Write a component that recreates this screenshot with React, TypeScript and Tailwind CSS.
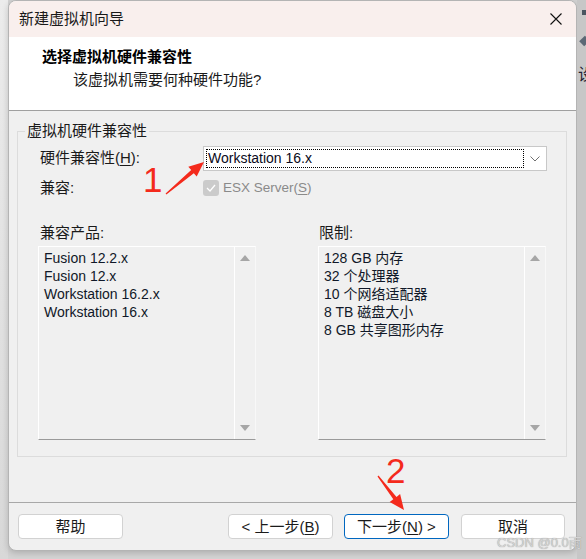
import React from 'react';

const font = "font-['Liberation_Sans','Noto_Sans_CJK_SC',sans-serif]";

// polygon for a hand drawn red arrow, thin tail -> wide head
const arrowPoints = (tx: number, ty: number, hx: number, hy: number) => {
  const dx = hx - tx;
  const dy = hy - ty;
  const len = Math.sqrt(dx * dx + dy * dy);
  const ux = dx / len;
  const uy = dy / len;
  const px = -uy;
  const py = ux;
  const headLen = 15;
  const bx = hx - ux * headLen;
  const by = hy - uy * headLen;
  const pts = [
    [tx + px * 0.6, ty + py * 0.6],
    [bx + px * 2, by + py * 2],
    [bx + px * 6.5, by + py * 6.5],
    [hx, hy],
    [bx - px * 6.5, by - py * 6.5],
    [bx - px * 2, by - py * 2],
    [tx - px * 0.6, ty - py * 0.6],
  ];
  return pts.map((p) => `${p[0].toFixed(1)},${p[1].toFixed(1)}`).join(' ');
};

const ListBox: React.FC<{ items: string[] }> = ({ items }) => (
  <div className="flex h-[194px] border border-t-white border-l-white border-r-[#f8f8f8] border-b-[#9a9a9a] bg-[#f0f0f0]">
    <div className="flex-1 pl-[5px] pt-[2px] text-[14px] leading-[18px] text-[#101828]">
      {items.map((it) => (
        <div key={it}>{it}</div>
      ))}
    </div>
    <div className="w-[21px] border-l border-l-white flex flex-col items-center justify-between py-[8px]">
      <svg width="10" height="6" viewBox="0 0 10 6">
        <polygon points="5,0 10,6 0,6" fill="#a6a6a6" />
      </svg>
      <svg width="10" height="6" viewBox="0 0 10 6">
        <polygon points="0,0 10,0 5,6" fill="#a6a6a6" />
      </svg>
    </div>
  </div>
);

const Btn: React.FC<{ children: React.ReactNode; primary?: boolean; w?: string }> = ({ children, primary, w }) => (
  <button
    type="button"
    className={`${w ?? 'w-[105px]'} h-[25px] rounded-[4px] bg-white text-[15px] leading-none text-[#1a1a1a] border ${
      primary ? 'border-[#0067c0]' : 'border-[#d2d2d2]'
    }`}
  >
    {children}
  </button>
);

export default function App() {
  return (
    <div className={`relative flex w-[586px] h-[559px] overflow-hidden bg-[#d3d3d3] ${font}`}>
      <div className="w-[8px] shrink-0 bg-gradient-to-b from-[#ececec] to-[#d8d8d8]" />

      <div className="w-[569px] h-[551px] shrink-0 flex flex-col rounded-[8px] border border-[#b4b4b4] bg-[#f0f0f0] overflow-hidden shadow-[0_2px_6px_rgba(0,0,0,0.18)]">
        {/* title bar */}
        <div className="h-[36px] shrink-0 flex items-center justify-between pl-[10px] pr-[14px] bg-[#f9efed] text-[15px] text-[#1a1a1a]">
          <span>新建虚拟机向导</span>
          <svg width="12" height="12" viewBox="0 0 12 12">
            <path d="M0.5 0.5 L11.5 11.5 M11.5 0.5 L0.5 11.5" stroke="#111" strokeWidth="1.1" />
          </svg>
        </div>

        {/* header */}
        <div className="h-[74px] shrink-0 bg-white border-b border-[#a0a0a0] pl-[33px] pt-[10px]">
          <div className="h-[20px] leading-[20px] text-[15px] font-bold text-black">选择虚拟机硬件兼容性</div>
          <div className="mt-[3px] ml-[31px] h-[20px] leading-[20px] text-[15px] text-[#1a1a1a]">该虚拟机需要何种硬件功能?</div>
        </div>

        {/* body */}
        <div className="h-[392px] shrink-0 border-b border-[#a8a8a8] pt-[10px] pl-[8px] pr-[9px]">
          <fieldset className="border border-[#dcdcdc] pl-[7px] pr-[7px] pb-[16px]">
            <legend className="px-[2px] h-[20px] leading-[20px] text-[15px] text-[#1a1a1a]">虚拟机硬件兼容性</legend>
            <div className="ml-[13px] mr-[12px] text-[15px] text-[#1a1a1a]">
              <div className="mt-[5px] h-[25px] grid grid-cols-[165px_1fr] items-center">
                <span className="pl-[2px]">
                  硬件兼容性(<span className="underline underline-offset-2">H</span>):
                </span>
                <div className="h-[25px] flex items-center border border-[#c8c8c8] bg-white">
                  <div className="ml-[2px] w-[318px] h-[19px] border border-dotted border-black flex items-center pl-[1px] text-[14px] text-[#0a0a20]">
                    Workstation 16.x
                  </div>
                  <div className="flex-1 flex justify-center">
                    <svg width="10" height="6" viewBox="0 0 10 6">
                      <path d="M0.5 0.5 L5 5 L9.5 0.5" fill="none" stroke="#707070" strokeWidth="1" />
                    </svg>
                  </div>
                </div>
              </div>

              <div className="mt-[5px] h-[24px] grid grid-cols-[165px_1fr] items-center">
                <span className="pl-[2px]">兼容:</span>
                <div className="flex items-center gap-[4px]">
                  <div className="w-[16px] h-[16px] rounded-[3px] bg-[#cbcbcb] flex items-center justify-center">
                    <svg width="10" height="8" viewBox="0 0 10 8">
                      <path d="M1 4 L4 7 L9 1" fill="none" stroke="#fff" strokeWidth="1.3" />
                    </svg>
                  </div>
                  <span className="text-[13.5px] text-[#8a8a8a]">
                    ESX Server(<span className="underline underline-offset-2">S</span>)
                  </span>
                </div>
              </div>

              <div className="mt-[23px] h-[20px] leading-[20px] grid grid-cols-[218px_228px] gap-x-[62px]">
                <span className="pl-[2px]">兼容产品:</span>
                <span className="pl-[1px]">限制:</span>
              </div>

              <div className="mt-[3px] grid grid-cols-[218px_228px] gap-x-[62px]">
                <ListBox items={['Fusion 12.2.x', 'Fusion 12.x', 'Workstation 16.2.x', 'Workstation 16.x']} />
                <ListBox items={['128 GB 内存', '32 个处理器', '10 个网络适配器', '8 TB 磁盘大小', '8 GB 共享图形内存']} />
              </div>
            </div>
          </fieldset>
        </div>

        {/* footer */}
        <div className="flex-1 flex items-start pt-[11px] pl-[9px] pr-[11px]">
          <Btn>帮助</Btn>
          <div className="flex-1" />
          <Btn>
            &lt; 上一步(<span className="underline underline-offset-2">B</span>)
          </Btn>
          <div className="w-[11px]" />
          <Btn primary>
            下一步(<span className="underline underline-offset-2">N</span>) &gt;
          </Btn>
          <div className="w-[12px]" />
          <Btn w="w-[104px]">取消</Btn>
        </div>
      </div>

      {/* right strip (background desktop) */}
      <div className="flex-1 bg-[#c7c7c7] flex flex-col items-end pt-[10px] gap-[22px]">
        <div className="w-[4px] h-[5px] bg-[#4a5560]" />
        <div className="w-[7px] h-[8px] bg-[#5b6875] rotate-45 mr-[-2px]" />
        <span className="text-[16px] leading-none text-[#223] mr-[-8px]">设</span>
      </div>

      {/* red annotations */}
      <svg className="absolute inset-0 pointer-events-none" width="586" height="559" viewBox="0 0 586 559">
        <polygon points={arrowPoints(166, 194, 204, 162)} fill="#f42a1c" />
        <polygon points={arrowPoints(378, 476, 404, 510)} fill="#f42a1c" />
      </svg>
      <span className="absolute left-[143px] top-[160px] text-[35px] leading-[40px] text-[#f42a1c] font-['Liberation_Sans',sans-serif]">
        1
      </span>
      <span className="absolute left-[386px] top-[451px] text-[35px] leading-[40px] text-[#f42a1c] font-['Liberation_Sans',sans-serif]">
        2
      </span>

      {/* watermark */}
      <span className="absolute left-[497px] top-[536px] text-[13px] leading-[14px] text-[#d4d4d4] [text-shadow:0_0_1px_#8a8a8a]">
        CSDN @0.0雨
      </span>
    </div>
  );
}
